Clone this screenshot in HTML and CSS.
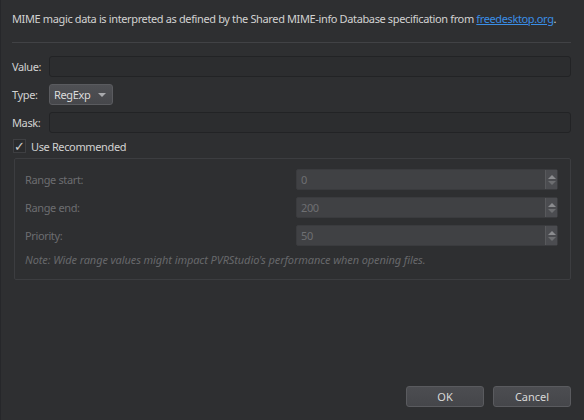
FILE: index.html
```html
<!DOCTYPE html>
<html>
<head>
<meta charset="utf-8">
<link rel="stylesheet" href="styles.css">
</head>
<body>
<div class="dialog">
  <p class="intro">MIME magic data is interpreted as defined by the Shared MIME-info Database specification from <a href="#">freedesktop.org</a>.</p>
  <div class="sep"></div>
  <div class="form">
    <div class="row"><span class="lbl">Value:</span><div class="input"></div></div>
    <div class="row"><span class="lbl">Type:</span><div class="combo">RegExp<span class="caret"></span></div></div>
    <div class="row"><span class="lbl">Mask:</span><div class="input"></div></div>
  </div>
  <div class="check"><span class="box">✓</span><span>Use Recommended</span></div>
  <div class="group">
    <div class="grow"><span class="glbl">Range start:</span><div class="spin"><span class="val">0</span><span class="arrows"><i class="up"></i><i class="down"></i></span></div></div>
    <div class="grow"><span class="glbl">Range end:</span><div class="spin"><span class="val">200</span><span class="arrows"><i class="up"></i><i class="down"></i></span></div></div>
    <div class="grow"><span class="glbl">Priority:</span><div class="spin"><span class="val">50</span><span class="arrows"><i class="up"></i><i class="down"></i></span></div></div>
    <p class="note">Note: Wide range values might impact PVRStudio's performance when opening files.</p>
  </div>
  <div class="spacer"></div>
  <div class="buttons"><button class="btn">OK</button><button class="btn">Cancel</button></div>
</div>
</body>
</html>
```
FILE: styles.css
```css
html, body { margin: 0; padding: 0; }
body {
  width: 584px; height: 420px; overflow: hidden;
  background: #2e2f31;
  font-family: "Noto Sans", sans-serif;
  font-size: 11px;
  letter-spacing: -0.37px;
  color: #d2d2d2;
  border-left: 1px solid #26272a;
  box-sizing: border-box;
}
.dialog {
  height: 420px; box-sizing: border-box;
  display: flex; flex-direction: column;
  padding: 0 13px 13px 11px;
}
.intro { margin: 0; padding-top: 10px; height: 17px; line-height: 17px; white-space: nowrap; }
.intro a { color: #3a8ee6; text-decoration: underline; }
.sep { height: 1px; background: #414245; margin-top: 15px; }
.form { display: flex; flex-direction: column; gap: 7px; margin-top: 13px; }
.row { display: flex; align-items: center; height: 21px; }
.lbl { width: 37px; flex: none; }
.input {
  flex: 1; height: 21px; box-sizing: border-box;
  border: 1px solid #222325; border-radius: 3px; background: #2c2d2f;
}
.combo {
  width: 64px; height: 21px; box-sizing: border-box;
  border: 1px solid #5a5b5f; border-radius: 3px;
  background: linear-gradient(#4f5054, #46474b);
  display: flex; align-items: center; padding-left: 4px; color: #dcdcdc;
  position: relative;
}
.caret {
  position: absolute; right: 6px; top: 8px;
  width: 0; height: 0;
  border-left: 4px solid transparent; border-right: 4px solid transparent;
  border-top: 4px solid #a9aaad;
}
.check { display: flex; align-items: center; height: 16px; margin-top: 5px; gap: 5px; }
.box {
  width: 13px; height: 14px; box-sizing: border-box;
  border: 1px solid #3e3f42; background: #2a2b2d;
  display: flex; align-items: center; justify-content: center;
  font-size: 13px; color: #d0d0d0; margin-left: 1px; letter-spacing: 0;
}
.group {
  margin: 4px 0 0 2px;
  border: 1px solid #3c3d40; border-radius: 2px;
  height: 122px; box-sizing: border-box;
  padding: 10px 12px 0 10px;
  display: flex; flex-direction: column; gap: 8px;
}
.grow { display: flex; align-items: center; height: 21px; }
.grow + .grow { margin-top: -1px; }
.glbl { flex: 1; color: #6c6d70; }
.spin {
  width: 262px; height: 21px; box-sizing: border-box;
  border: 1px solid #3a3b3e; border-radius: 2px; background: #404144;
  display: flex; align-items: center;
}
.val { flex: 1; padding-left: 4px; color: #6e6f72; }
.arrows {
  width: 12px; height: 19px; box-sizing: border-box;
  border-left: 1px solid #58595c; background: #4b4c50;
  display: flex; flex-direction: column; align-items: center; justify-content: center; gap: 2px;
}
.arrows i { width: 0; height: 0; border-left: 4px solid transparent; border-right: 4px solid transparent; }
.arrows .up { border-bottom: 4px solid #8b8c8f; }
.arrows .down { border-top: 4px solid #6d6e71; }
.note { margin: -2px 0 0; font-style: italic; color: #67686b; white-space: nowrap; letter-spacing: -0.1px; }
.spacer { flex: 1; }
.buttons { display: flex; justify-content: flex-end; gap: 9px; }
.btn {
  width: 78px; height: 21px; box-sizing: border-box;
  border: 1px solid #5a5b5f; border-radius: 3px;
  background: linear-gradient(#4c4d51, #45464a);
  color: #d8d8d8; font-family: inherit; font-size: 11px; padding: 0; letter-spacing: 0;
}
```
